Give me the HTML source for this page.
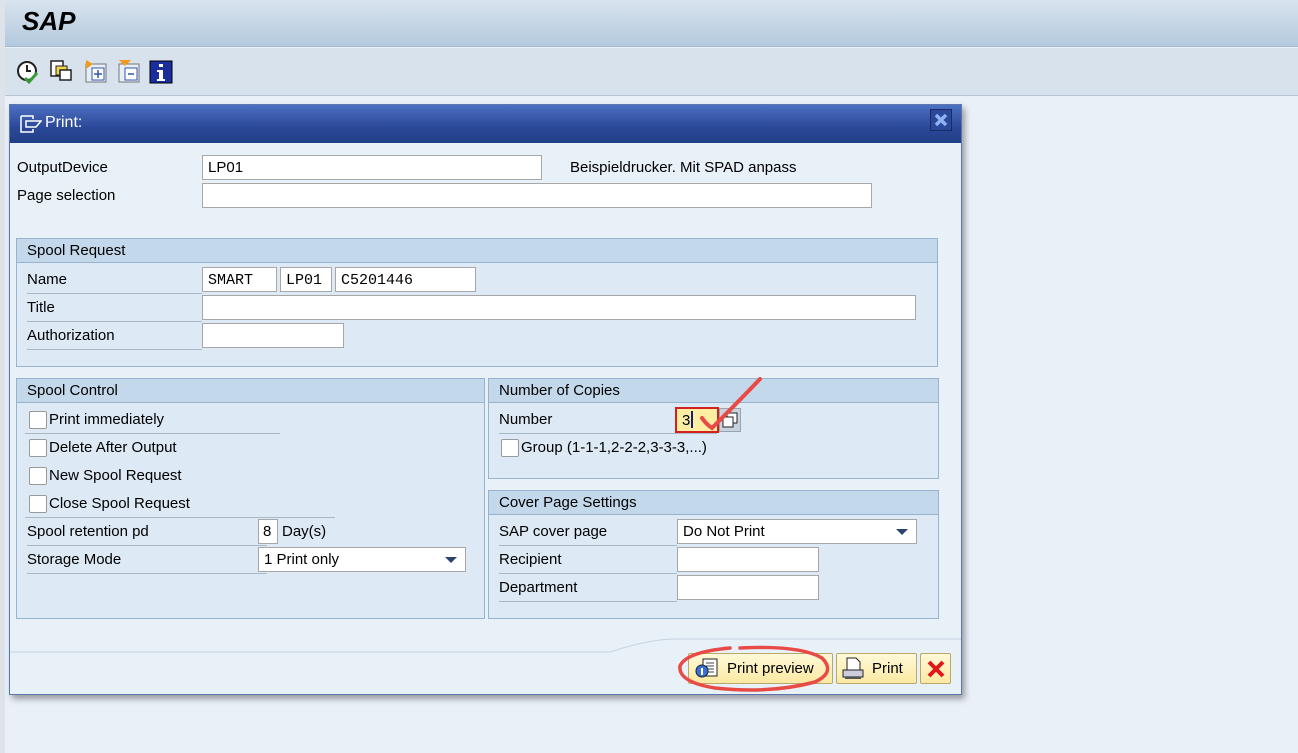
<!DOCTYPE html>
<html><head><meta charset="utf-8"><style>
*{box-sizing:border-box;margin:0;padding:0}
body{width:1298px;height:753px;overflow:hidden;background:#e9f0f7;font-family:"Liberation Sans",sans-serif;font-size:15px;color:#000;position:relative}
.a{position:absolute}
.hdr{left:5px;top:0;width:1293px;height:47px;background:linear-gradient(#d9e4ee,#b3c9de);border-bottom:1px solid #a7bacd}
.tb{left:5px;top:48px;width:1293px;height:48px;background:#d7e2ec;border-bottom:1px solid #b6c6d6}
.lbar{left:0;top:0;width:5px;height:753px;background:#dde3e9}
.dlg{left:9px;top:104px;width:953px;height:591px;background:#e8f0f8;border:1px solid #5a76ad;box-shadow:3px 4px 6px rgba(0,0,0,.35)}
.title{left:0;top:0;width:951px;height:38px;background:linear-gradient(#4d70c2,#2a4897 60%,#213e88);color:#fff;font-size:16px}
.inp{background:#fff;border:1px solid #a7a7a7;height:25px;padding:3px 5px;font-size:15px}
.mono{font-family:"Liberation Mono",monospace;font-size:15px;padding-top:4px}
.grp{background:#dde9f4;border:1px solid #97b3d0}
.gh{left:0;top:0;right:0;height:24px;background:#c4d8eb;border-bottom:1px solid #97b3d0;padding:3px 10px}
.lbl{height:27px;border-bottom:1px solid #aab7c4;padding-top:4px}
.cb{width:18px;height:18px;background:#fff;border:1px solid #9a9a9a;border-radius:2px}
.btn{background:linear-gradient(#fff9d8,#fbe9a2);border:1px solid #b9a86c;border-radius:2px;height:31px;top:548px}
.dd{width:8px;height:0;border-left:6px solid transparent;border-right:6px solid transparent;border-top:6px solid #2c4370}
</style></head><body>
<div class="a lbar"></div>
<div class="a hdr"><div class="a" style="left:17px;top:6px;font-size:26px;font-weight:bold;font-style:italic;letter-spacing:0px">SAP</div></div>
<div class="a tb">
<svg class="a" style="left:11px;top:12px" width="160" height="26" viewBox="0 0 160 26">
<circle cx="11" cy="11" r="9" fill="#fff" stroke="#222" stroke-width="2"/><path d="M11 5v6h4" stroke="#222" stroke-width="2" fill="none"/><path d="M9 18l4 4 8-9" stroke="#3a9a3a" stroke-width="3" fill="none"/>
<rect x="35" y="1" width="12" height="15" fill="#fff" stroke="#222" stroke-width="1.5"/><rect x="40" y="6" width="11" height="9" fill="#f2d54a" stroke="#222"/><rect x="44" y="10" width="11" height="10" fill="#fff" stroke="#222" stroke-width="1.5"/>
<rect x="70" y="4" width="20" height="18" fill="#e6eef8" stroke="#777"/><rect x="76" y="8" width="12" height="12" fill="#fff" stroke="#35a"/><path d="M82 10v8M78 14h8" stroke="#35a" stroke-width="1.5"/><path d="M70 0l7 4-7 5z" fill="#f29a1a"/>
<rect x="103" y="4" width="20" height="18" fill="#e6eef8" stroke="#777"/><rect x="109" y="8" width="12" height="12" fill="#fff" stroke="#35a"/><path d="M112 14h6" stroke="#35a" stroke-width="1.5"/><path d="M103 0h12l-6 6z" fill="#f29a1a"/>
<rect x="134" y="1" width="22" height="22" fill="#1a2e9c" stroke="#000"/><rect x="143" y="4" width="4" height="3" fill="#fff"/><path d="M141 10h6v9h2v2h-8v-2h2v-7h-2z" fill="#fff"/>
</svg>
</div>
<div class="a dlg">
<div class="a title">
<svg class="a" style="left:10px;top:10px" width="22" height="18" viewBox="0 0 22 18"><path d="M1 1h12v3M1 1v16h12v-3M6 6h15l-5 6H6z" stroke="#fff" stroke-width="1.5" fill="none"/></svg>
<div class="a" style="left:35px;top:9px">Print:</div>
<div class="a" style="left:920px;top:4px;width:22px;height:22px;background:#2a4898;border:1px solid #1a2c66"><svg width="20" height="20" viewBox="0 0 20 20"><path d="M5 5l10 10M15 5L5 15" stroke="#8fb2f5" stroke-width="3.5"/></svg></div>
</div>
<div class="a" style="left:7px;top:54px">OutputDevice</div>
<div class="a inp" style="left:192px;top:50px;width:340px">LP01</div>
<div class="a" style="left:560px;top:54px">Beispieldrucker. Mit SPAD anpass</div>
<div class="a" style="left:7px;top:82px">Page selection</div>
<div class="a inp" style="left:192px;top:78px;width:670px"></div>

<div class="a grp" style="left:6px;top:133px;width:922px;height:129px">
<div class="a gh">Spool Request</div>
<div class="a lbl" style="left:10px;top:28px;width:175px">Name</div>
<div class="a inp mono" style="left:185px;top:28px;width:75px">SMART</div>
<div class="a inp mono" style="left:263px;top:28px;width:52px">LP01</div>
<div class="a inp mono" style="left:318px;top:28px;width:141px">C5201446</div>
<div class="a lbl" style="left:10px;top:56px;width:175px">Title</div>
<div class="a inp" style="left:185px;top:56px;width:714px"></div>
<div class="a lbl" style="left:10px;top:84px;width:175px">Authorization</div>
<div class="a inp" style="left:185px;top:84px;width:142px"></div>
</div>

<div class="a grp" style="left:6px;top:273px;width:469px;height:241px">
<div class="a gh">Spool Control</div>
<div class="a lbl" style="left:8px;top:28px;width:255px;padding-left:24px">Print immediately</div>
<div class="a cb" style="left:12px;top:32px"></div>
<div class="a" style="left:32px;top:60px">Delete After Output</div><div class="a cb" style="left:12px;top:60px"></div>
<div class="a" style="left:32px;top:88px">New Spool Request</div><div class="a cb" style="left:12px;top:88px"></div>
<div class="a lbl" style="left:8px;top:112px;width:310px;padding-left:24px">Close Spool Request</div><div class="a cb" style="left:12px;top:116px"></div>
<div class="a lbl" style="left:10px;top:140px;width:240px">Spool retention pd</div>
<div class="a inp" style="left:241px;top:140px;width:20px;padding:3px 4px">8</div>
<div class="a" style="left:265px;top:144px">Day(s)</div>
<div class="a lbl" style="left:10px;top:168px;width:240px">Storage Mode</div>
<div class="a inp" style="left:241px;top:168px;width:208px">1 Print only<div class="a dd" style="left:186px;top:9px"></div></div>
</div>

<div class="a grp" style="left:478px;top:273px;width:451px;height:101px">
<div class="a gh">Number of Copies</div>
<div class="a lbl" style="left:10px;top:28px;width:218px">Number</div>
<div class="a" style="left:186px;top:28px;width:44px;height:26px;background:#fdeea2;border:2px solid #d52020;padding:2px 5px">3<span style="display:inline-block;width:2px;height:17px;background:#102080;vertical-align:-3px;margin-left:1px"></span></div>
<div class="a" style="left:230px;top:29px;width:22px;height:24px;background:#c9d3dd;border:1px solid #98a4b0"><svg width="20" height="20" viewBox="0 0 20 20"><rect x="7" y="4" width="10" height="10" fill="#fff" stroke="#222"/><rect x="3" y="8" width="10" height="10" fill="#fff" stroke="#222"/></svg></div>
<div class="a cb" style="left:12px;top:60px"></div><div class="a" style="left:32px;top:60px">Group (1-1-1,2-2-2,3-3-3,...)</div>
</div>

<div class="a grp" style="left:478px;top:385px;width:451px;height:129px">
<div class="a gh">Cover Page Settings</div>
<div class="a lbl" style="left:10px;top:28px;width:178px">SAP cover page</div>
<div class="a inp" style="left:188px;top:28px;width:240px">Do Not Print<div class="a dd" style="left:218px;top:9px"></div></div>
<div class="a lbl" style="left:10px;top:56px;width:178px">Recipient</div>
<div class="a inp" style="left:188px;top:56px;width:142px"></div>
<div class="a lbl" style="left:10px;top:84px;width:178px">Department</div>
<div class="a inp" style="left:188px;top:84px;width:142px"></div>
</div>

<svg class="a" style="left:0;top:528px" width="951" height="20"><path d="M0 19H600Q640 6 665 6H951" stroke="#c6d3e0" fill="none"/></svg>
<div class="a btn" style="left:678px;width:145px"><svg class="a" style="left:6px;top:4px" width="24" height="22" viewBox="0 0 24 22"><rect x="8" y="1" width="14" height="17" fill="#fff" stroke="#222"/><path d="M11 5h8M11 8h8M11 11h8M11 14h8" stroke="#444"/><circle cx="7" cy="13" r="6" fill="#3b6fd6" stroke="#123"/><path d="M7 10v7" stroke="#fff" stroke-width="2"/></svg><div class="a" style="left:38px;top:6px">Print preview</div></div>
<div class="a btn" style="left:826px;width:81px"><svg class="a" style="left:4px;top:3px" width="24" height="24" viewBox="0 0 24 24"><path d="M6 1h9l4 4v9H6z" fill="#fff" stroke="#222"/><rect x="2" y="13" width="20" height="7" fill="#ccd" stroke="#222"/><rect x="4" y="20" width="16" height="2" fill="#555"/></svg><div class="a" style="left:35px;top:6px">Print</div></div>
<div class="a btn" style="left:910px;width:31px"><svg class="a" style="left:5px;top:5px" width="20" height="20" viewBox="0 0 20 20"><path d="M3 3l14 14M17 3L3 17" stroke="#e01818" stroke-width="4"/></svg></div>
</div>

<svg class="a" style="left:0;top:0" width="1298" height="753">
<path d="M760 379 Q740 400 712 428 Q706 424 702 418" stroke="#e84a45" stroke-width="4" fill="none" stroke-linecap="round"/>
<path d="M740 648 Q800 645 822 658 Q836 672 815 682 Q770 694 715 688 Q678 682 680 666 Q686 652 730 648" stroke="#e84a45" stroke-width="3.5" fill="none" stroke-linecap="round"/>
</svg>
</body></html>
